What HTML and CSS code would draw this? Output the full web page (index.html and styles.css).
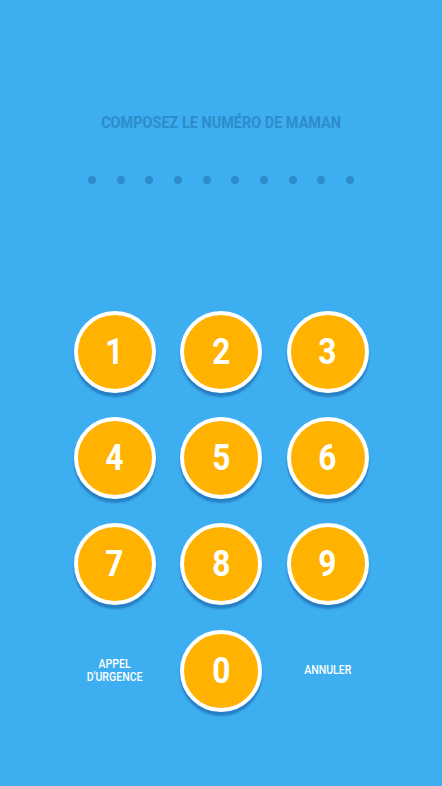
FILE: index.html
```html
<!DOCTYPE html>
<html lang="fr">
<head>
<meta charset="utf-8">
<link rel="stylesheet" href="styles.css">
</head>
<body>
<div class="screen">
  <h1 class="title"><span>COMPOSEZ LE NUMÉRO DE MAMAN</span></h1>
  <div class="dots">
    <i></i><i></i><i></i><i></i><i></i><i></i><i></i><i></i><i></i><i></i>
  </div>
  <div class="pad">
    <button class="key"><span>1</span></button>
    <button class="key"><span>2</span></button>
    <button class="key"><span>3</span></button>
    <button class="key"><span>4</span></button>
    <button class="key"><span>5</span></button>
    <button class="key"><span>6</span></button>
    <button class="key"><span>7</span></button>
    <button class="key"><span>8</span></button>
    <button class="key"><span>9</span></button>
    <div class="label"><span>APPEL<br>D'URGENCE</span></div>
    <button class="key"><span>0</span></button>
    <div class="label"><span>ANNULER</span></div>
  </div>
</div>
</body>
</html>
```
FILE: styles.css
```css
html, body {
  margin: 0;
  padding: 0;
}
body {
  background: #3daef0;
  font-family: Roboto, "Liberation Sans", sans-serif;
}
.screen {
  width: 442px;
  height: 786px;
  display: flex;
  flex-direction: column;
  align-items: center;
}
.title {
  margin: 112px 0 0;
  height: 21px;
  line-height: 21px;
  font-size: 17px;
  font-weight: 700;
  color: #2d8ccb;
  text-align: center;
  white-space: nowrap;
}
.title span {
  display: inline-block;
  transform: scaleX(0.85);
}
.dots {
  margin-top: 43px;
  display: flex;
  gap: 20.7px;
}
.dots i {
  display: block;
  width: 8px;
  height: 8px;
  border-radius: 50%;
  background: #2d8ccb;
}
.pad {
  margin-top: 127px;
  display: grid;
  grid-template-columns: repeat(3, 82px);
  grid-auto-rows: 82px;
  column-gap: 24.5px;
  row-gap: 24.2px;
}
.key {
  box-sizing: border-box;
  width: 82px;
  height: 82px;
  padding: 0;
  border: 4px solid #ffffff;
  border-radius: 50%;
  background: #ffb300;
  box-shadow: 0 4px 2px rgba(20, 90, 160, 0.55);
  color: #ffffff;
  font-family: Roboto, "Liberation Sans", sans-serif;
  font-size: 36px;
  font-weight: 700;
  display: flex;
  align-items: center;
  justify-content: center;
}
.key span {
  display: inline-block;
  transform: scaleX(0.88);
}
.label {
  display: flex;
  align-items: center;
  justify-content: center;
  color: #ffffff;
  font-size: 12px;
  font-weight: 500;
  line-height: 13px;
  text-align: center;
}
.label span {
  display: inline-block;
  transform: scaleX(0.88);
}
```
